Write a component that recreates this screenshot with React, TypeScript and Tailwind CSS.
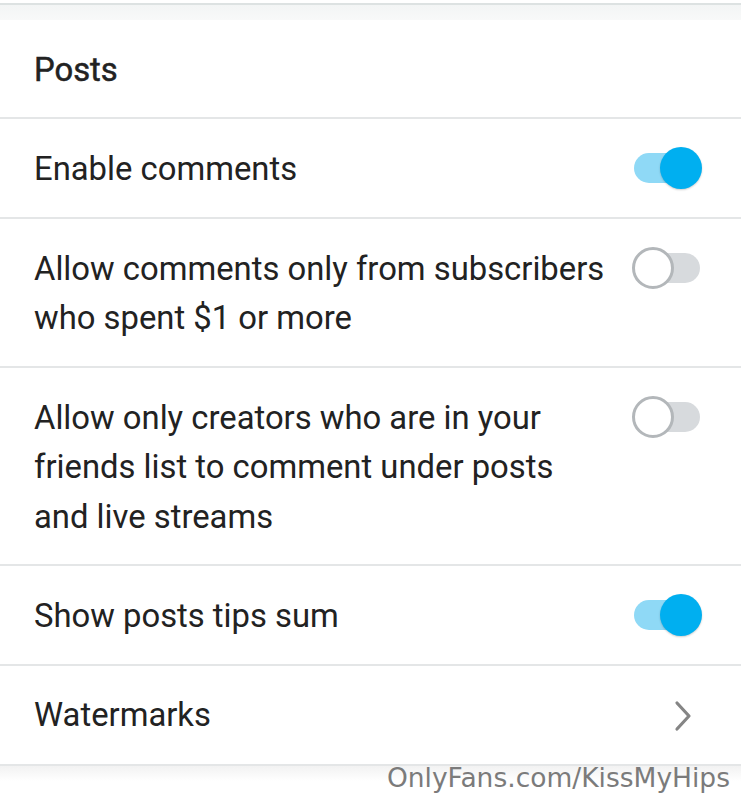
import React from 'react'

type Row =
  | { kind: 'toggle'; label: string; on: boolean }
  | { kind: 'link'; label: string }

const rows: Row[] = [
  { kind: 'toggle', label: 'Enable comments', on: true },
  { kind: 'toggle', label: 'Allow comments only from subscribers who spent $1 or more', on: false },
  { kind: 'toggle', label: 'Allow only creators who are in your friends list to comment under posts and live streams', on: false },
  { kind: 'toggle', label: 'Show posts tips sum', on: true },
  { kind: 'link', label: 'Watermarks' },
]

const Toggle: React.FC<{ on: boolean }> = ({ on }) => (
  <div className="relative mt-[2px] h-[42px] w-[70px] shrink-0">
    <div className={`absolute left-[2px] right-[2px] top-[6px] h-[30px] rounded-full ${on ? 'bg-[#8fd9f6]' : 'bg-[#d7dadd]'}`} />
    {on ? (
      <div className="absolute right-0 top-0 h-[42px] w-[42px] rounded-full bg-[#00aff0] shadow-[0_1px_2px_rgba(0,0,0,0.2)]" />
    ) : (
      <div className="absolute left-0 top-0 h-[42px] w-[42px] rounded-full border-[3px] border-[#b3b7ba] bg-white" />
    )}
  </div>
)

const Chevron = () => (
  <svg width="22" height="32" viewBox="0 0 22 32" fill="none" className="mr-[8px] self-center">
    <path d="M5 3 L17 16 L5 29" stroke="#858585" strokeWidth="3.2" strokeLinecap="round" strokeLinejoin="round" />
  </svg>
)

export default function App() {
  return (
    <div className="relative h-[800px] w-[741px] overflow-hidden bg-white font-['Roboto',sans-serif] text-[#222222]">
      <div className="h-[3px] bg-white" />
      <div className="h-[2px] bg-[#dde2e2]" />
      <div className="h-[15px] bg-gradient-to-b from-[#f3f5f5] to-[#f8f9f9]" />

      <div className="flex h-[99px] items-center border-b-2 border-[#e4e6e7] px-[34px] pt-[5px] text-[32.8px] [-webkit-text-stroke:0.5px_#222222]">
        Posts
      </div>

      {rows.map((row) => (
        <div
          key={row.label}
          className={`flex border-b-2 border-[#e4e6e7] pl-[34px] pr-[39px] ${row.kind === 'link' ? 'h-[100px] items-center pt-[2px]' : 'items-start pb-[22px] pt-[26px]'}`}
        >
          <div className="w-[580px] text-[32.8px] leading-[49.5px]">{row.label}</div>
          <div className="ml-auto flex">{row.kind === 'toggle' ? <Toggle on={row.on} /> : <Chevron />}</div>
        </div>
      ))}

      <div className="h-[15px] bg-gradient-to-b from-[#f2f2f2] to-white" />

      <div className="absolute bottom-[9px] right-[11px] font-['DejaVu_Sans',sans-serif] text-[26.5px] leading-none text-[#7b7b7b]">
        OnlyFans.com/KissMyHips
      </div>
    </div>
  )
}
